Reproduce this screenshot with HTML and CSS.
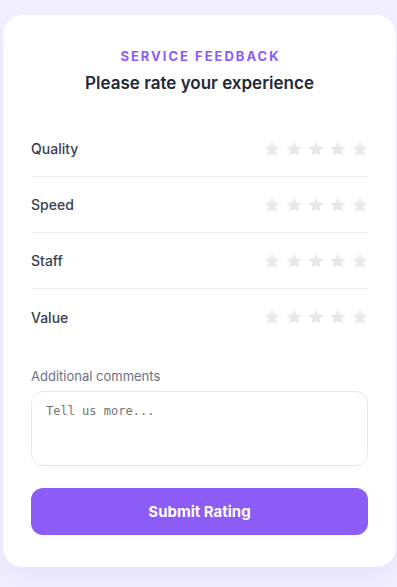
FILE: index.html
```html
<!DOCTYPE html>
<html lang="en">
<head>
<meta charset="utf-8">
<title>Service Feedback</title>
<link rel="stylesheet" href="styles.css">
</head>
<body>
<div class="card">
  <header class="head">
    <div class="eyebrow">SERVICE FEEDBACK</div>
    <h1 class="title">Please rate your experience</h1>
  </header>
  <div class="rows">
    <div class="row">
      <span class="label">Quality</span>
      <div class="stars">
        <svg viewBox="0 0 24 24"><path d="M12 2l2.9 6.6 7.1.6-5.4 4.7 1.6 7L12 17.2 5.8 20.9l1.6-7L2 9.2l7.1-.6z"/></svg>
        <svg viewBox="0 0 24 24"><path d="M12 2l2.9 6.6 7.1.6-5.4 4.7 1.6 7L12 17.2 5.8 20.9l1.6-7L2 9.2l7.1-.6z"/></svg>
        <svg viewBox="0 0 24 24"><path d="M12 2l2.9 6.6 7.1.6-5.4 4.7 1.6 7L12 17.2 5.8 20.9l1.6-7L2 9.2l7.1-.6z"/></svg>
        <svg viewBox="0 0 24 24"><path d="M12 2l2.9 6.6 7.1.6-5.4 4.7 1.6 7L12 17.2 5.8 20.9l1.6-7L2 9.2l7.1-.6z"/></svg>
        <svg viewBox="0 0 24 24"><path d="M12 2l2.9 6.6 7.1.6-5.4 4.7 1.6 7L12 17.2 5.8 20.9l1.6-7L2 9.2l7.1-.6z"/></svg>
      </div>
    </div>
    <div class="row">
      <span class="label">Speed</span>
      <div class="stars">
        <svg viewBox="0 0 24 24"><path d="M12 2l2.9 6.6 7.1.6-5.4 4.7 1.6 7L12 17.2 5.8 20.9l1.6-7L2 9.2l7.1-.6z"/></svg>
        <svg viewBox="0 0 24 24"><path d="M12 2l2.9 6.6 7.1.6-5.4 4.7 1.6 7L12 17.2 5.8 20.9l1.6-7L2 9.2l7.1-.6z"/></svg>
        <svg viewBox="0 0 24 24"><path d="M12 2l2.9 6.6 7.1.6-5.4 4.7 1.6 7L12 17.2 5.8 20.9l1.6-7L2 9.2l7.1-.6z"/></svg>
        <svg viewBox="0 0 24 24"><path d="M12 2l2.9 6.6 7.1.6-5.4 4.7 1.6 7L12 17.2 5.8 20.9l1.6-7L2 9.2l7.1-.6z"/></svg>
        <svg viewBox="0 0 24 24"><path d="M12 2l2.9 6.6 7.1.6-5.4 4.7 1.6 7L12 17.2 5.8 20.9l1.6-7L2 9.2l7.1-.6z"/></svg>
      </div>
    </div>
    <div class="row">
      <span class="label">Staff</span>
      <div class="stars">
        <svg viewBox="0 0 24 24"><path d="M12 2l2.9 6.6 7.1.6-5.4 4.7 1.6 7L12 17.2 5.8 20.9l1.6-7L2 9.2l7.1-.6z"/></svg>
        <svg viewBox="0 0 24 24"><path d="M12 2l2.9 6.6 7.1.6-5.4 4.7 1.6 7L12 17.2 5.8 20.9l1.6-7L2 9.2l7.1-.6z"/></svg>
        <svg viewBox="0 0 24 24"><path d="M12 2l2.9 6.6 7.1.6-5.4 4.7 1.6 7L12 17.2 5.8 20.9l1.6-7L2 9.2l7.1-.6z"/></svg>
        <svg viewBox="0 0 24 24"><path d="M12 2l2.9 6.6 7.1.6-5.4 4.7 1.6 7L12 17.2 5.8 20.9l1.6-7L2 9.2l7.1-.6z"/></svg>
        <svg viewBox="0 0 24 24"><path d="M12 2l2.9 6.6 7.1.6-5.4 4.7 1.6 7L12 17.2 5.8 20.9l1.6-7L2 9.2l7.1-.6z"/></svg>
      </div>
    </div>
    <div class="row">
      <span class="label">Value</span>
      <div class="stars">
        <svg viewBox="0 0 24 24"><path d="M12 2l2.9 6.6 7.1.6-5.4 4.7 1.6 7L12 17.2 5.8 20.9l1.6-7L2 9.2l7.1-.6z"/></svg>
        <svg viewBox="0 0 24 24"><path d="M12 2l2.9 6.6 7.1.6-5.4 4.7 1.6 7L12 17.2 5.8 20.9l1.6-7L2 9.2l7.1-.6z"/></svg>
        <svg viewBox="0 0 24 24"><path d="M12 2l2.9 6.6 7.1.6-5.4 4.7 1.6 7L12 17.2 5.8 20.9l1.6-7L2 9.2l7.1-.6z"/></svg>
        <svg viewBox="0 0 24 24"><path d="M12 2l2.9 6.6 7.1.6-5.4 4.7 1.6 7L12 17.2 5.8 20.9l1.6-7L2 9.2l7.1-.6z"/></svg>
        <svg viewBox="0 0 24 24"><path d="M12 2l2.9 6.6 7.1.6-5.4 4.7 1.6 7L12 17.2 5.8 20.9l1.6-7L2 9.2l7.1-.6z"/></svg>
      </div>
    </div>
  </div>
  <label class="field-label" for="comments">Additional comments</label>
  <textarea id="comments" class="comments" placeholder="Tell us more..."></textarea>
  <button class="submit" type="button">Submit Rating</button>
</div>
</body>
</html>
```
FILE: styles.css
```css
* { box-sizing: border-box; }
html, body { margin: 0; }
body {
  background: #f3f0ff;
  font-family: Inter, "Noto Sans", sans-serif;
  padding: 15px 1px 20px 3px;
}
.card {
  background: #fff;
  border-radius: 20px;
  padding: 33px 28px 32px;
  box-shadow: 0 10px 28px rgba(139, 92, 246, 0.10);
  display: flex;
  flex-direction: column;
}
.head { text-align: center; }
.eyebrow {
  font-size: 13px;
  line-height: 16px;
  font-weight: 700;
  letter-spacing: 2px;
  color: #8b5cf6;
  padding-left: 2px;
}
.title {
  margin: 7px 0 0;
  font-size: 17px;
  line-height: 24px;
  font-weight: 600;
  color: #1f2937;
}
.rows {
  margin-top: 26px;
  display: flex;
  flex-direction: column;
}
.row {
  height: 56px;
  display: flex;
  align-items: center;
  justify-content: space-between;
  border-bottom: 1px solid #f1f1f4;
}
.row:last-child { border-bottom: none; }
.label {
  font-size: 14px;
  font-weight: 500;
  color: #374151;
}
.stars {
  display: flex;
  gap: 4px;
  margin-right: -1px;
}
.stars svg {
  width: 18px;
  height: 18px;
  fill: #e5e7eb;
}
.field-label {
  margin-top: 22px;
  font-size: 13px;
  line-height: 18px;
  color: #6b7280;
}
.comments {
  margin-top: 6px;
  height: 75px;
  border: 1px solid #e5e7eb;
  border-radius: 12px;
  padding: 12px 14px;
  font-size: 12px;
  resize: none;
  outline: none;
}
.comments::placeholder { color: #757575; }
.submit {
  margin-top: 22px;
  height: 47px;
  border: none;
  border-radius: 12px;
  background: #8b5cf6;
  color: #fff;
  font-family: Inter, "Noto Sans", sans-serif;
  font-size: 15px;
  font-weight: 700;
}
```
